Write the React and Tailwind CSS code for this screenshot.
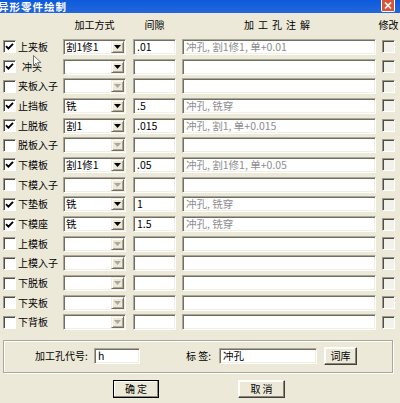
import React from 'react';

const rows = [
  { label: '上夹板', on: true, method: '割1修1', gap: '.01', note: '冲孔, 割1修1, 单+0.01' },
  { label: '冲头', on: true, method: '', gap: '', note: '', indent: true },
  { label: '夹板入子', on: false },
  { label: '止挡板', on: true, method: '铣', gap: '.5', note: '冲孔, 铣穿' },
  { label: '上脱板', on: true, method: '割1', gap: '.015', note: '冲孔, 割1, 单+0.015' },
  { label: '脱板入子', on: false },
  { label: '下模板', on: true, method: '割1修1', gap: '.05', note: '冲孔, 割1修1, 单+0.05' },
  { label: '下模入子', on: false },
  { label: '下垫板', on: true, method: '铣', gap: '1', note: '冲孔, 铣穿' },
  { label: '下模座', on: true, method: '铣', gap: '1.5', note: '冲孔, 铣穿' },
  { label: '上模板', on: false },
  { label: '上模入子', on: false },
  { label: '下脱板', on: false },
  { label: '下夹板', on: false },
  { label: '下背板', on: false },
];

const Check = ({ on, dim }) => (
  <div className={`w-[13px] h-[13px] shrink-0 border border-t-[#9c998c] border-l-[#9c998c] border-b-white border-r-white shadow-[inset_1px_1px_0_#4f4d45] ${dim ? 'bg-[#f2f1ea]' : 'bg-white'} flex items-center justify-center`}>
    {on && (
      <svg width="9" height="9" viewBox="0 0 9 9">
        <path d="M1 4.2 L3.4 6.6 L8 1.8" fill="none" stroke="#000" strokeWidth="1.9" />
      </svg>
    )}
  </div>
);

const Field = ({ text, gray, className = '' }) => (
  <div className={`h-[16px] bg-white border border-t-[#aca899] border-l-[#aca899] border-b-white border-r-white shadow-[inset_1px_1px_0_#716f64,inset_-1px_-1px_0_#f1efe2] flex items-center pl-[3px] leading-[14px] whitespace-nowrap ${gray ? 'text-[#8d8d8d]' : 'text-black'} ${className}`}>
    {text}
  </div>
);

const Combo = ({ value, enabled }) => (
  <div className="w-[63px] h-[16px] bg-white border border-t-[#aca899] border-l-[#aca899] border-b-white border-r-white shadow-[inset_1px_1px_0_#716f64,inset_-1px_-1px_0_#f1efe2] flex items-center pl-[2px] pr-[1px] leading-[14px]">
    <span className="flex-1 whitespace-nowrap">{value}</span>
    <div className="w-[13px] h-[12px] bg-[#ece9d8] border border-t-[#f1efe2] border-l-[#f1efe2] border-b-[#716f64] border-r-[#716f64] shadow-[inset_1px_1px_0_white,inset_-1px_-1px_0_#aca899] flex items-center justify-center">
      <svg width="7" height="4" viewBox="0 0 7 4">
        <path d="M0 0 H7 L3.5 4 Z" fill={enabled ? '#000' : '#aca899'} />
      </svg>
    </div>
  </div>
);

const Button = ({ children, def, className = '' }) => (
  <div className={`h-[18px] bg-[#ece9d8] flex items-center justify-center border ${def ? 'border-black' : 'border-t-white border-l-white border-b-[#404040] border-r-[#404040]'} shadow-[inset_-1px_-1px_0_#8a877a,inset_1px_1px_0_white] ${className}`}>
    {children}
  </div>
);

export default function App() {
  return (
    <div className="w-[400px] h-[403px] bg-[#ece9d8] font-['Noto_Sans_CJK_SC',sans-serif] text-[10.5px] leading-none text-black relative overflow-hidden">
      <div className="h-[13px] bg-gradient-to-b from-[#0a5bdc] to-[#2466da] flex items-center justify-between">
        <span className="-ml-[2px] text-white font-bold text-[10.5px] leading-[12px] tracking-[1px]">异形零件绘制</span>
        <div className="mr-[5px] self-start w-[14px] h-[12px] bg-[#d9553a] border border-white border-t-0 rounded-b-[2px] flex items-center justify-center">
          <svg width="8" height="7" viewBox="0 0 8 7">
            <path d="M1 0.5 L7 6.5 M7 0.5 L1 6.5" stroke="white" strokeWidth="1.6" />
          </svg>
        </div>
      </div>

      <div className="h-[24px] flex items-center text-[10px]">
        <div className="w-[63px]" />
        <div className="w-[63px] text-center">加工方式</div>
        <div className="ml-[7px] w-[43px] text-center">间隙</div>
        <div className="ml-[6px] w-[194px] text-center tracking-[4px]">加工孔注解</div>
        <div className="ml-[4px] w-[17px] flex justify-center whitespace-nowrap">修改</div>
      </div>

      <div className="flex flex-col">
        {rows.map((r) => (
          <div key={r.label} className="h-[19.7px] flex items-center">
            <div className="w-[63px] flex items-center pl-[3px]">
              <Check on={r.on} />
              <span className={`${r.indent ? 'ml-[6px]' : 'ml-[2px]'} text-[10px] whitespace-nowrap`}>{r.label}</span>
            </div>
            <Combo value={r.method} enabled={r.on} />
            <Field className="ml-[7px] w-[43px]" text={r.gap} />
            <Field className="ml-[6px] w-[194px]" text={r.note} gray />
            <div className="ml-[6px]">
              <Check dim />
            </div>
          </div>
        ))}
      </div>

      <div className="mt-[7.5px] ml-[3px] w-[390px] h-[33px] border border-[#aca899] shadow-[inset_1px_1px_0_white,1px_1px_0_white] flex items-center">
        <span className="ml-[31px] w-[58px] text-[10px] whitespace-nowrap">加工孔代号:</span>
        <Field className="ml-[1px] w-[46px]" text="h" />
        <span className="ml-[46px] w-[33px] text-[10px] whitespace-nowrap">标 签:</span>
        <Field className="w-[98px]" text="冲孔" />
        <Button className="ml-[7px] w-[33px] text-[10px]">词库</Button>
      </div>

      <div className="mt-[7px] flex text-[10px]">
        <Button def className="ml-[113px] w-[46px]">确 定</Button>
        <Button className="ml-[79px] w-[47px]">取 消</Button>
      </div>

      <svg className="absolute left-[33px] top-[55px]" width="9" height="13" viewBox="0 0 9 13">
        <path d="M0.5 0.5 V10.5 L3 8.2 L4.8 12 L6.3 11.3 L4.6 7.6 H8 Z" fill="white" stroke="#555" strokeWidth="0.8" />
      </svg>
    </div>
  );
}
